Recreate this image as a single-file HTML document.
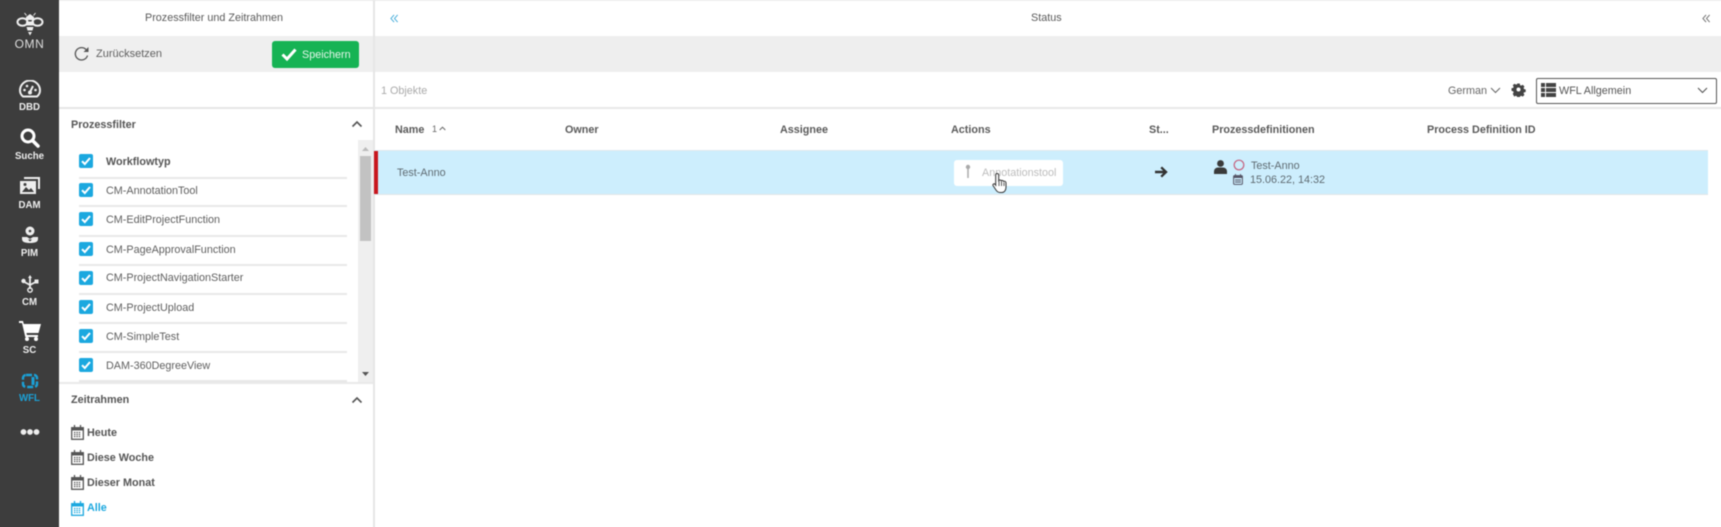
<!DOCTYPE html>
<html lang="de">
<head>
<meta charset="utf-8">
<title>Status</title>
<style>
html{margin:0;padding:0;background:#fff;width:1721px;height:527px;overflow:hidden;}
body{margin:0;padding:0;background:#fff;width:1721px;height:527px;overflow:hidden;position:relative;font-family:"Liberation Sans",sans-serif;font-size:10.8px;color:#555;}
#clip{position:absolute;left:0;top:0;width:1721px;height:527px;overflow:hidden;}
#root{position:absolute;left:-4px;top:-4px;width:1729px;height:535px;overflow:hidden;filter:blur(0.5px);background:#fff;}
#in{position:absolute;left:4px;top:4px;width:1721px;height:527px;}
.a{position:absolute;}
.t{position:absolute;white-space:nowrap;line-height:14px;}
.b{font-weight:bold;}
.nav{position:absolute;left:0;width:59px;text-align:center;color:#eee;font-size:9.7px;line-height:13px;font-weight:bold;}
.cb{position:absolute;left:79px;width:14px;height:14px;background:#1ba8df;border-radius:2px;}
.cb svg{display:block;}
.div{position:absolute;left:79px;width:268px;height:1.5px;background:#e8e8e8;}
.rowt{position:absolute;left:106px;white-space:nowrap;line-height:14px;color:#5f5f5f;}
.th{position:absolute;top:123px;white-space:nowrap;line-height:14px;font-weight:bold;color:#5a5a5a;}
.tf{position:absolute;left:87px;white-space:nowrap;line-height:14px;font-weight:bold;color:#555;}
.cal{position:absolute;left:71px;}
</style>
</head>
<body>
<div id="clip"><div id="root"><div id="in">
  <div class="a" style="left:0;top:-4px;width:1725px;height:5px;background:#eee;"></div>
  <!-- Sidebar -->
  <div class="a" style="left:-4px;top:-4px;width:63px;height:535px;background:#3d3d3d;"></div>

  <svg class="a" style="left:16px;top:12px" width="28" height="25" viewBox="0 0 28 25" fill="none">
    <ellipse cx="6.500" cy="10" rx="5" ry="3.800" stroke="#eee" stroke-width="2"/>
    <ellipse cx="21.500" cy="10" rx="5" ry="3.800" stroke="#eee" stroke-width="2"/>
    <path d="M10 5 14 2l4 3v3h-8z" fill="#eee"/>
    <path d="M10 9.500h8v4h-8zM10.500 15h7l-1 3.500h-5zM12 20h4l-2 3.500z" fill="#eee"/>
    <path d="M10.500 3.500 8.500 1M17.500 3.500l2-2.500" stroke="#eee" stroke-width="1"/>
  </svg>
  <div class="t" style="left:13px;top:37px;width:33px;text-align:center;color:#ddd;font-size:12px;letter-spacing:.6px;">OMN</div>

  <svg class="a" style="left:19px;top:80px" width="22" height="18" viewBox="0 0 22 18" fill="none">
    <path d="M4 16.500C2 14.800 1 12.800 1 10.500a10 10 0 0 1 20 0c0 2.300-1 4.300-3 6z" stroke="#eee" stroke-width="2"/>
    <path d="M11 12 14 6" stroke="#eee" stroke-width="2"/>
    <circle cx="11" cy="12.500" r="2" fill="#eee"/>
    <circle cx="5.500" cy="10" r="1.300" fill="#eee"/><circle cx="8" cy="6" r="1.300" fill="#eee"/><circle cx="16.500" cy="10" r="1.300" fill="#eee"/>
  </svg>
  <div class="nav" style="top:101px;">DBD</div>

  <svg class="a" style="left:20px;top:128px" width="20" height="20" viewBox="0 0 20 20" fill="none">
    <circle cx="8" cy="8" r="6" stroke="#fff" stroke-width="3"/>
    <path d="M12.500 12.500 18 18" stroke="#fff" stroke-width="3.500" stroke-linecap="round"/>
  </svg>
  <div class="nav" style="top:150px;">Suche</div>

  <svg class="a" style="left:20px;top:177px" width="20" height="18" viewBox="0 0 20 18">
    <path d="M4 0h16v12h-2V2H4z" fill="#eee"/>
    <rect x="0" y="4" width="16" height="13" fill="#eee"/>
    <path d="M2 15l4-5 3 3 2-2 3 4z" fill="#3d3d3d"/>
    <circle cx="5" cy="7.500" r="1.500" fill="#3d3d3d"/>
  </svg>
  <div class="nav" style="top:198.500px;">DAM</div>

  <svg class="a" style="left:22px;top:226px" width="16" height="18" viewBox="0 0 16 18">
    <circle cx="8" cy="5" r="4.500" fill="#eee"/>
    <circle cx="8" cy="5" r="1.300" fill="#3d3d3d"/>
    <path d="M0 11h5l3 2 3-2h5v2c0 3-3 4-8 4s-8-1-8-4z" fill="#eee"/>
    <path d="M6 13.500h4l-2 2z" fill="#3d3d3d"/>
  </svg>
  <div class="nav" style="top:247px;">PIM</div>

  <svg class="a" style="left:21px;top:275px" width="18" height="18" viewBox="0 0 18 18" fill="none">
    <path d="M9 3v11M2.500 6.500 9 10l6.500-3.500" stroke="#eee" stroke-width="1.800"/>
    <path d="M9 0l2 3H7z" fill="#eee"/>
    <circle cx="9" cy="15" r="2.200" stroke="#eee" stroke-width="1.400"/>
    <circle cx="2.500" cy="6" r="2.200" fill="#eee"/>
    <rect x="13.500" y="4.500" width="4" height="4" fill="#eee"/>
  </svg>
  <div class="nav" style="top:296px;">CM</div>

  <svg class="a" style="left:19px;top:321px" width="22" height="20" viewBox="0 0 22 20">
    <path d="M0 0h4l.8 3H22l-2.500 9H7.500l.4 2H19v2H6.300L3 2H0z" fill="#fff"/>
    <circle cx="8" cy="18" r="2" fill="#fff"/><circle cx="17" cy="18" r="2" fill="#fff"/>
  </svg>
  <div class="nav" style="top:344px;">SC</div>

  <svg class="a" style="left:21px;top:373px" width="18" height="17" viewBox="0 0 18 17" fill="none">
    <path d="M5 2h8a3 3 0 0 1 3 3v6a3 3 0 0 1-3 3H5a3 3 0 0 1-3-3V5a3 3 0 0 1 3-3z" stroke="#1ba0d6" stroke-width="2.400" stroke-dasharray="6 2"/>
    <path d="M12 4v8" stroke="#1ba0d6" stroke-width="3"/>
  </svg>
  <div class="nav" style="top:392px;color:#1ba0d6;">WFL</div>

  <svg class="a" style="left:20px;top:428px" width="20" height="8" viewBox="0 0 20 8">
    <circle cx="3.500" cy="4" r="2.900" fill="#eee"/><circle cx="10" cy="4" r="2.900" fill="#eee"/><circle cx="16.500" cy="4" r="2.900" fill="#eee"/>
  </svg>

  <!-- Left panel -->
  <div class="a" style="left:373px;top:0;width:1.500px;height:531px;background:#e6e6e6;"></div>
  <div class="t" style="left:145px;top:11px;color:#5a5a5a;">Prozessfilter und Zeitrahmen</div>
  <div class="a" style="left:59px;top:36px;width:314px;height:36px;background:#efefef;"></div>
  <svg class="a" style="left:74px;top:46px" width="16" height="16" viewBox="0 0 16 16" fill="none">
    <path d="M13.500 9.500A6.200 6.200 0 1 1 12 3.500" stroke="#555" stroke-width="1.300"/>
    <path d="M14.500 1v5h-5z" fill="#555"/>
  </svg>
  <div class="t" style="left:96px;top:47px;color:#5f5f5f;font-size:11px;">Zurücksetzen</div>
  <div class="a" style="left:272px;top:41px;width:87px;height:27px;background:#16b354;border-radius:3px;"></div>
  <svg class="a" style="left:281px;top:47px" width="16" height="14" viewBox="0 0 16 14" fill="none">
    <path d="M1.500 7.500 6 12 14.500 2.500" stroke="#fff" stroke-width="3"/>
  </svg>
  <div class="t" style="left:302px;top:48px;color:#e4f6ea;">Speichern</div>
  <div class="a" style="left:59px;top:107px;width:314px;height:1.500px;background:#e6e6e6;"></div>

  <div class="t b" style="left:71px;top:118px;color:#555;">Prozessfilter</div>
  <svg class="a" style="left:351px;top:120px" width="12" height="8" viewBox="0 0 12 8" fill="none"><path d="M1.500 6.500 6 2l4.500 4.500" stroke="#555" stroke-width="1.600"/></svg>

  <!-- scrollbar -->
  <div class="a" style="left:358px;top:140px;width:15px;height:243px;background:#efefef;"></div>
  <div class="a" style="left:360px;top:156px;width:11px;height:85px;background:#c2c2c2;"></div>
  <svg class="a" style="left:361px;top:146px" width="9" height="6" viewBox="0 0 9 6"><path d="M4.500 1 8 5H1z" fill="#bbb"/></svg>
  <svg class="a" style="left:361px;top:371px" width="9" height="6" viewBox="0 0 9 6"><path d="M1 1h7L4.500 5z" fill="#555"/></svg>

  <!-- filter list -->
  <div class="cb" style="top:154px;"><svg width="14" height="14" viewBox="0 0 14 14" fill="none"><path d="M3 7.200 5.800 10 11 4" stroke="#fff" stroke-width="2"/></svg></div>
  <div class="rowt b" style="top:155px;color:#555;">Workflowtyp</div>
  <div class="div" style="top:177px;"></div>
  <div class="cb" style="top:183px;"><svg width="14" height="14" viewBox="0 0 14 14" fill="none"><path d="M3 7.200 5.800 10 11 4" stroke="#fff" stroke-width="2"/></svg></div>
  <div class="rowt" style="top:184px;">CM-AnnotationTool</div>
  <div class="div" style="top:205px;"></div>
  <div class="cb" style="top:212px;"><svg width="14" height="14" viewBox="0 0 14 14" fill="none"><path d="M3 7.200 5.800 10 11 4" stroke="#fff" stroke-width="2"/></svg></div>
  <div class="rowt" style="top:213px;">CM-EditProjectFunction</div>
  <div class="div" style="top:235px;"></div>
  <div class="cb" style="top:242px;"><svg width="14" height="14" viewBox="0 0 14 14" fill="none"><path d="M3 7.200 5.800 10 11 4" stroke="#fff" stroke-width="2"/></svg></div>
  <div class="rowt" style="top:243px;">CM-PageApprovalFunction</div>
  <div class="div" style="top:264px;"></div>
  <div class="cb" style="top:271px;"><svg width="14" height="14" viewBox="0 0 14 14" fill="none"><path d="M3 7.200 5.800 10 11 4" stroke="#fff" stroke-width="2"/></svg></div>
  <div class="rowt" style="top:271px;">CM-ProjectNavigationStarter</div>
  <div class="div" style="top:293px;"></div>
  <div class="cb" style="top:300px;"><svg width="14" height="14" viewBox="0 0 14 14" fill="none"><path d="M3 7.200 5.800 10 11 4" stroke="#fff" stroke-width="2"/></svg></div>
  <div class="rowt" style="top:301px;">CM-ProjectUpload</div>
  <div class="div" style="top:322px;"></div>
  <div class="cb" style="top:329px;"><svg width="14" height="14" viewBox="0 0 14 14" fill="none"><path d="M3 7.200 5.800 10 11 4" stroke="#fff" stroke-width="2"/></svg></div>
  <div class="rowt" style="top:330px;">CM-SimpleTest</div>
  <div class="div" style="top:351px;"></div>
  <div class="cb" style="top:358px;"><svg width="14" height="14" viewBox="0 0 14 14" fill="none"><path d="M3 7.200 5.800 10 11 4" stroke="#fff" stroke-width="2"/></svg></div>
  <div class="rowt" style="top:359px;">DAM-360DegreeView</div>
  <div class="div" style="top:380px;"></div>
  <div class="a" style="left:59px;top:382px;width:314px;height:2px;background:#e9e9e9;"></div>

  <!-- Zeitrahmen -->
  <div class="t b" style="left:71px;top:393px;color:#555;">Zeitrahmen</div>
  <svg class="a" style="left:351px;top:396px" width="12" height="8" viewBox="0 0 12 8" fill="none"><path d="M1.500 6.500 6 2l4.500 4.500" stroke="#555" stroke-width="1.600"/></svg>

  <svg class="cal" style="top:425px" width="13" height="15" viewBox="0 0 13 15" fill="none"><rect x=".7" y="2.700" width="11.600" height="11.600" stroke="#555" stroke-width="1.300"/><path d="M.7 3h11.600v2.500H.7z" fill="#555"/><path d="M3.500 0v3M9.500 0v3" stroke="#555" stroke-width="1.300"/><path d="M3 7.500h7M3 9.500h7M3 11.500h7" stroke="#555" stroke-width="1.200" stroke-dasharray="1.400 1"/></svg>
  <div class="tf" style="top:426px;">Heute</div>
  <svg class="cal" style="top:450px" width="13" height="15" viewBox="0 0 13 15" fill="none"><rect x=".7" y="2.700" width="11.600" height="11.600" stroke="#555" stroke-width="1.300"/><path d="M.7 3h11.600v2.500H.7z" fill="#555"/><path d="M3.500 0v3M9.500 0v3" stroke="#555" stroke-width="1.300"/><path d="M3 7.500h7M3 9.500h7M3 11.500h7" stroke="#555" stroke-width="1.200" stroke-dasharray="1.400 1"/></svg>
  <div class="tf" style="top:451px;">Diese Woche</div>
  <svg class="cal" style="top:475px" width="13" height="15" viewBox="0 0 13 15" fill="none"><rect x=".7" y="2.700" width="11.600" height="11.600" stroke="#555" stroke-width="1.300"/><path d="M.7 3h11.600v2.500H.7z" fill="#555"/><path d="M3.500 0v3M9.500 0v3" stroke="#555" stroke-width="1.300"/><path d="M3 7.500h7M3 9.500h7M3 11.500h7" stroke="#555" stroke-width="1.200" stroke-dasharray="1.400 1"/></svg>
  <div class="tf" style="top:476px;">Dieser Monat</div>
  <svg class="cal" style="top:501px" width="13" height="15" viewBox="0 0 13 15" fill="none"><rect x=".7" y="2.700" width="11.600" height="11.600" stroke="#1ba8df" stroke-width="1.300"/><path d="M.7 3h11.600v2.500H.7z" fill="#1ba8df"/><path d="M3.500 0v3M9.500 0v3" stroke="#1ba8df" stroke-width="1.300"/><path d="M3 7.500h7M3 9.500h7M3 11.500h7" stroke="#1ba8df" stroke-width="1.200" stroke-dasharray="1.400 1"/></svg>
  <div class="tf" style="top:501px;color:#1ba8df;">Alle</div>

  <!-- Main header -->
  <svg class="a" style="left:390px;top:14px" width="9" height="9" viewBox="0 0 10 10" fill="none"><path d="M4.500 1 1 5l3.500 4M8.500 1 5 5l3.500 4" stroke="#3aa8d8" stroke-width="1"/></svg>
  <div class="t" style="left:1031px;top:11px;color:#5a5a5a;">Status</div>
  <svg class="a" style="left:1702px;top:14px" width="9" height="9" viewBox="0 0 10 10" fill="none"><path d="M4.500 1 1 5l3.500 4M8.500 1 5 5l3.500 4" stroke="#666" stroke-width="1"/></svg>
  <div class="a" style="left:375px;top:36px;width:1350px;height:36px;background:#eee;"></div>

  <!-- Toolbar -->
  <div class="t" style="left:381px;top:84px;color:#aaa;">1 Objekte</div>
  <div class="t" style="left:1448px;top:84px;color:#666;">German</div>
  <svg class="a" style="left:1490px;top:87px" width="11" height="7" viewBox="0 0 11 7" fill="none"><path d="M1 1l4.500 4.500L10 1" stroke="#666" stroke-width="1"/></svg>
  <svg class="a" style="left:1511px;top:82px" width="15" height="15" viewBox="0 0 24 24"><path fill="#444" fill-rule="evenodd" d="M9.500 0h5l.8 3.400 2.100.9 3-1.800 3.500 3.500-1.800 3 .9 2.100 3.400.8v5l-3.400.8-.9 2.100 1.800 3-3.500 3.500-3-1.800-2.100.9-.8 3.400h-5l-.8-3.400-2.100-.9-3 1.800L.5 20.800l1.800-3-.9-2.100L-2 14.500v-5l3.400-.8.9-2.100-1.800-3L4 .5l3 1.800 2.100-.9zM12 8a4 4 0 1 0 0 8 4 4 0 0 0 0-8z" transform="translate(2.400 2.400) scale(.8)"/></svg>
  <div class="a" style="left:1536px;top:78px;width:179px;height:24px;border:1px solid #555;border-radius:2px;box-sizing:content-box;"></div>
  <svg class="a" style="left:1541px;top:83px" width="15" height="14" viewBox="0 0 15 14"><path fill="#444" d="M0 0h4v4H0zM5 0h10v4H5zM0 5h4v4H0zM5 5h10v4H5zM0 10h4v4H0zM5 10h10v4H5z"/></svg>
  <div class="t" style="left:1559px;top:84px;color:#555;">WFL Allgemein</div>
  <svg class="a" style="left:1697px;top:87px" width="11" height="7" viewBox="0 0 11 7" fill="none"><path d="M1 1l4.500 4.500L10 1" stroke="#555" stroke-width="1.100"/></svg>
  <div class="a" style="left:375px;top:107px;width:1350px;height:1.500px;background:#e8e8e8;"></div>

  <!-- Table head -->
  <div class="th" style="left:395px;">Name</div>
  <div class="t" style="left:432px;top:122px;color:#666;font-size:9px;">1</div>
  <svg class="a" style="left:439px;top:126px" width="7" height="5" viewBox="0 0 7 5" fill="none"><path d="M.7 4 3.500 1.200 6.300 4" stroke="#666" stroke-width="1"/></svg>
  <div class="th" style="left:565px;">Owner</div>
  <div class="th" style="left:780px;">Assignee</div>
  <div class="th" style="left:951px;">Actions</div>
  <div class="th" style="left:1149px;">St...</div>
  <div class="th" style="left:1212px;">Prozessdefinitionen</div>
  <div class="th" style="left:1427px;">Process Definition ID</div>

  <!-- Row -->
  <div class="a" style="left:374px;top:150px;width:1334px;height:45px;background:#cdeefd;border-top:1px solid #dfe9ee;border-bottom:1px solid #e2e6e8;box-sizing:border-box;"></div>
  <div class="a" style="left:374px;top:151px;width:4px;height:43px;background:#c8161d;"></div>
  <div class="t" style="left:397px;top:166px;color:#5f6b72;">Test-Anno</div>
  <div class="a" style="left:954px;top:160px;width:109px;height:26px;background:#fff;border-radius:3px;"></div>
  <svg class="a" style="left:964px;top:164px" width="8" height="15" viewBox="0 0 8 15" fill="none"><circle cx="4" cy="3" r="2.200" fill="#aaa"/><path d="M4 5v9" stroke="#aaa" stroke-width="1.500"/></svg>
  <div class="t" style="left:982px;top:166px;color:#bdbdbd;">Annotationstool</div>
  <svg class="a" style="left:992px;top:172px" width="16" height="22" viewBox="0 0 16 22"><path d="M5 1.500c1 0 1.700.7 1.700 1.700v5.300c.5-.6 2-.7 2.500.3.600-.6 2-.5 2.400.6.800-.4 2.400 0 2.400 1.600v4c0 3-1.500 5.500-4 5.500H8c-2 0-3-1-4-2.500l-3-4.500c-.6-1 .8-2.300 2-1.300l.7 1V3.200C3.700 2.200 4 1.500 5 1.500z" fill="#fff" stroke="#333" stroke-width="1"/><path d="M7 9v5M9.500 9.500V14M12 10.500V14" stroke="#333" stroke-width=".8"/></svg>
  <svg class="a" style="left:1155px;top:166px" width="13" height="12" viewBox="0 0 13 12"><path d="M7 .5 12.700 6 7 11.500l-1.600-1.600 2.700-2.600H0V4.700h8.100L5.400 2.100z" fill="#333"/></svg>
  <svg class="a" style="left:1214px;top:160px" width="13" height="14" viewBox="0 0 13 14"><circle cx="6.500" cy="3.500" r="3.400" fill="#3a3a3a"/><path d="M0 14v-2.500C0 9 2 7.500 4 7.500h5c2 0 4 1.500 4 4V14z" fill="#3a3a3a"/></svg>
  <svg class="a" style="left:1233px;top:159px" width="12" height="12" viewBox="0 0 12 12" fill="none"><circle cx="6" cy="6" r="4.800" stroke="#c4627f" stroke-width="1.200"/></svg>
  <div class="t" style="left:1251px;top:159px;color:#5f6b72;">Test-Anno</div>
  <svg class="a" style="left:1233px;top:174px" width="10" height="11" viewBox="0 0 10 11" fill="none"><rect x=".6" y="1.600" width="8.800" height="8.800" rx="1" stroke="#556" stroke-width="1"/><path d="M.6 2h8.800v2H.6z" fill="#556"/><path d="M2.500 0v2M7.500 0v2M2 6h6M2 8h6" stroke="#556" stroke-width=".9"/></svg>
  <div class="t" style="left:1250px;top:173px;color:#5f6b72;">15.06.22, 14:32</div>
</div></div></div>
</body>
</html>
